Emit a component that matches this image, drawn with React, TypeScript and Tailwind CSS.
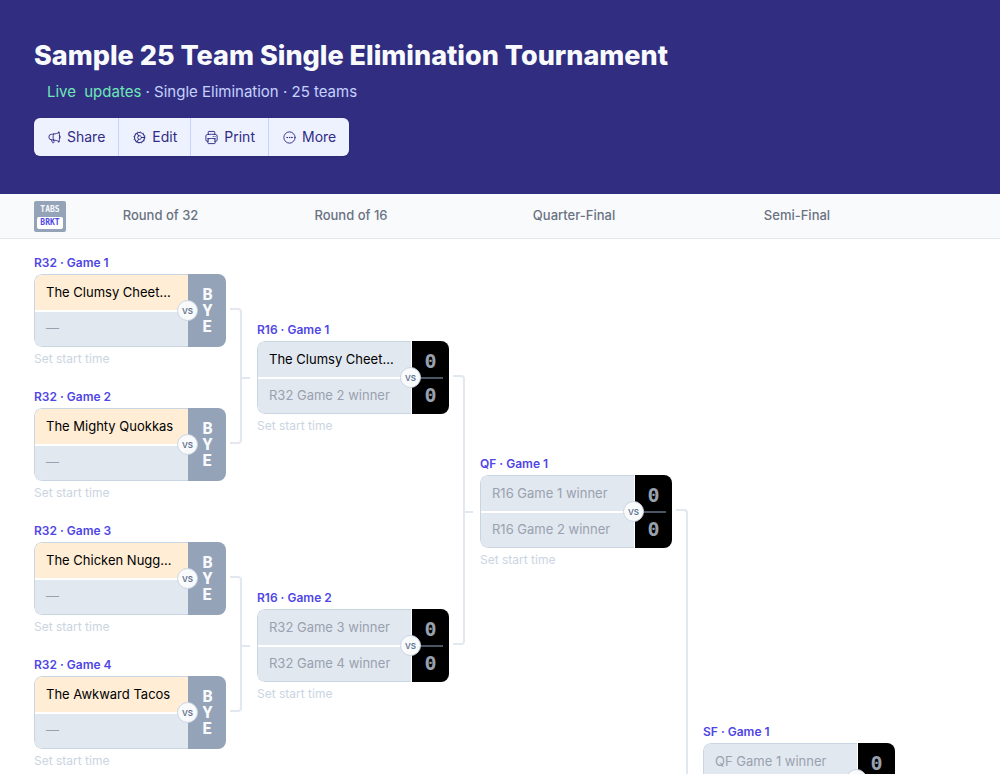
import React, { useState } from 'react';
import clsx from 'clsx';
import {
  HiOutlineEllipsisHorizontalCircle,
  HiOutlineMegaphone,
  HiOutlinePrinter,
} from 'react-icons/hi2';

interface Team {
  name: string;
  known: boolean;
}

interface Match {
  label: string;
  top: Team;
  bottom: Team;
  bye?: boolean;
}

interface Round {
  name: string;
  slotClass: string;
  pairClass: string;
  pairs: number;
  matches: Match[];
}

const team = (name: string): Team => ({ name, known: true });
const pending = (name: string): Team => ({ name, known: false });

const rounds: Round[] = [
  {
    name: 'Round of 32',
    slotClass: 'h-[134px]',
    pairClass: 'h-[268px]',
    pairs: 2,
    matches: [
      { label: 'R32 · Game 1', top: team('The Clumsy Cheet...'), bottom: pending('—'), bye: true },
      { label: 'R32 · Game 2', top: team('The Mighty Quokkas'), bottom: pending('—'), bye: true },
      { label: 'R32 · Game 3', top: team('The Chicken Nugg...'), bottom: pending('—'), bye: true },
      { label: 'R32 · Game 4', top: team('The Awkward Tacos'), bottom: pending('—'), bye: true },
    ],
  },
  {
    name: 'Round of 16',
    slotClass: 'h-[268px]',
    pairClass: 'h-[536px]',
    pairs: 1,
    matches: [
      { label: 'R16 · Game 1', top: team('The Clumsy Cheet...'), bottom: pending('R32 Game 2 winner') },
      { label: 'R16 · Game 2', top: pending('R32 Game 3 winner'), bottom: pending('R32 Game 4 winner') },
    ],
  },
  {
    name: 'Quarter-Final',
    slotClass: 'h-[536px]',
    pairClass: 'h-[1072px]',
    pairs: 1,
    matches: [
      { label: 'QF · Game 1', top: pending('R16 Game 1 winner'), bottom: pending('R16 Game 2 winner') },
    ],
  },
  {
    name: 'Semi-Final',
    slotClass: 'h-[1072px]',
    pairClass: '',
    pairs: 0,
    matches: [
      { label: 'SF · Game 1', top: pending('QF Game 1 winner'), bottom: pending('QF Game 2 winner') },
    ],
  },
];

function CogIcon({ className }: { className?: string }) {
  return (
    <svg className={className} viewBox="0 0 24 24" fill="none" stroke="currentColor" strokeLinecap="round">
      <circle cx="12" cy="12" r="8" strokeWidth={1.7} />
      <circle cx="12" cy="12" r="9.3" strokeWidth={1.2} strokeDasharray="1.4 3.47" strokeLinecap="butt" />
      <path strokeWidth={1.6} d="M20 12h-5M8 5.1l2.5 4.3M8 18.9l2.5-4.3M10.5 9.4a3 3 0 0 1 4.5 2.6 3 3 0 0 1-4.5 2.6 3 3 0 0 1 0-5.2z" />
    </svg>
  );
}

const actions = [
  { label: 'Share', icon: HiOutlineMegaphone },
  { label: 'Edit', icon: CogIcon },
  { label: 'Print', icon: HiOutlinePrinter },
  { label: 'More', icon: HiOutlineEllipsisHorizontalCircle },
];

function TeamRow({ team, bye }: { team: Team; bye?: boolean }) {
  return (
    <div
      className={clsx(
        'flex flex-1 items-center pr-2 pl-[11px] text-[13px] whitespace-nowrap',
        team.known ? 'text-black' : 'text-gray-400',
        team.known && bye ? 'bg-[#ffedd5]' : 'bg-slate-200'
      )}
    >
      {team.name}
    </div>
  );
}

function MatchCard({ match }: { match: Match }) {
  return (
    <article className="w-48">
      <h3 className="h-6 pt-px text-xs leading-6 font-semibold text-[#4f46e5]">{match.label}</h3>
      <div className="relative flex h-[73px] overflow-hidden rounded-lg">
        <div className="flex w-[154px] flex-col gap-0.5 overflow-hidden rounded-l-lg border border-r-0 border-slate-300 bg-white">
          <TeamRow team={match.top} bye={match.bye} />
          <TeamRow team={match.bottom} bye={match.bye} />
        </div>
        {match.bye ? (
          <div className="flex flex-1 items-center justify-center bg-[#94a3b8] font-['Roboto',sans-serif] text-base leading-4 font-extrabold text-slate-50">
            <span className="w-[1ch] text-center break-all">BYE</span>
          </div>
        ) : (
          <div className="flex flex-1 flex-col items-center justify-center border-l border-white bg-black font-['DejaVu_Sans_Mono',monospace] text-xl leading-8 font-bold text-gray-400">
            <span>0</span>
            <span className="h-0.5 w-6 bg-gray-600" />
            <span>0</span>
          </div>
        )}
        <span className="absolute top-[26px] left-[143px] flex size-[21px] items-center justify-center rounded-full border border-slate-300 bg-slate-50 text-[8px] font-semibold text-slate-500">
          VS
        </span>
      </div>
      <button type="button" className="block h-[25px] pb-0.5 text-xs text-slate-300">
        Set start time
      </button>
    </article>
  );
}

function Connector() {
  return (
    <>
      <div className="mb-1 h-[calc(50%+2px)] w-3 rounded-r border-y-2 border-r-2 border-slate-200" />
      <div className="h-0.5 w-2 bg-slate-200" />
    </>
  );
}

export default function App() {
  const [view, setView] = useState('brkt');

  return (
    <div className="flex h-screen flex-col overflow-hidden bg-white font-['Inter',sans-serif]">
      <header className="bg-[#312e81] px-[34px] pt-9 pb-[38px]">
        <h1 className="truncate text-[27px] leading-10 font-extrabold text-slate-50">
          Sample 25 Team Single Elimination Tournament
        </h1>
        <p className="mt-1 pl-[13px] text-[15px] leading-6 text-indigo-200">
          <span className="text-[#6ee7b7]">
            Live <span className="ml-1">updates</span>
          </span>{' '}
          · Single Elimination · 25 teams
        </p>
        <div className="mt-3.5 inline-flex divide-x divide-indigo-200 overflow-hidden rounded-md bg-[#eef2ff] align-top shadow-sm">
          {actions.map(({ label, icon: Icon }) => (
            <button
              key={label}
              type="button"
              className="flex h-[38px] items-center gap-[5px] px-[13px] text-sm text-indigo-900"
            >
              <Icon className="size-[15px]" />
              {label}
            </button>
          ))}
        </div>
      </header>

      <div className="flex h-[45px] shrink-0 items-center border-b border-gray-200 bg-slate-50 pl-[34px]">
        <button
          type="button"
          onClick={() => setView(view === 'brkt' ? 'tabs' : 'brkt')}
          className="flex h-[31px] w-8 shrink-0 flex-col justify-between rounded-xs bg-[#94a3b8] p-[3px] font-['DejaVu_Sans_Mono',monospace] text-[8px] leading-3 font-bold"
        >
          <span className={clsx('w-full rounded-xs', view === 'tabs' ? 'bg-white text-[#4f46e5]' : 'text-slate-50')}>
            TABS
          </span>
          <span className={clsx('w-full rounded-xs', view === 'brkt' ? 'bg-white text-[#4f46e5]' : 'text-slate-50')}>
            BRKT
          </span>
        </button>
        <div className="flex">
          {rounds.map((round, i) => (
            <h2
              key={round.name}
              className={clsx(
                'shrink-0 text-center text-[13px] font-medium text-gray-500',
                i === 0 ? 'w-[189px]' : 'mr-[31px] w-48'
              )}
            >
              {round.name}
            </h2>
          ))}
        </div>
      </div>

      <main className="flex min-h-0 flex-1 items-start overflow-hidden pt-[5px] pl-[34px]">
        {rounds.map((round) => (
          <React.Fragment key={round.name}>
            <section className="shrink-0">
              {round.matches.map((match) => (
                <div key={match.label} className={clsx('flex items-center', round.slotClass)}>
                  <MatchCard match={match} />
                </div>
              ))}
            </section>
            {round.pairs > 0 && (
              <div className="w-[31px] shrink-0 pl-1">
                {Array.from({ length: round.pairs }, (_, i) => (
                  <div key={i} className={clsx('flex items-center', round.pairClass)}>
                    <Connector />
                  </div>
                ))}
              </div>
            )}
          </React.Fragment>
        ))}
      </main>
    </div>
  );
}
